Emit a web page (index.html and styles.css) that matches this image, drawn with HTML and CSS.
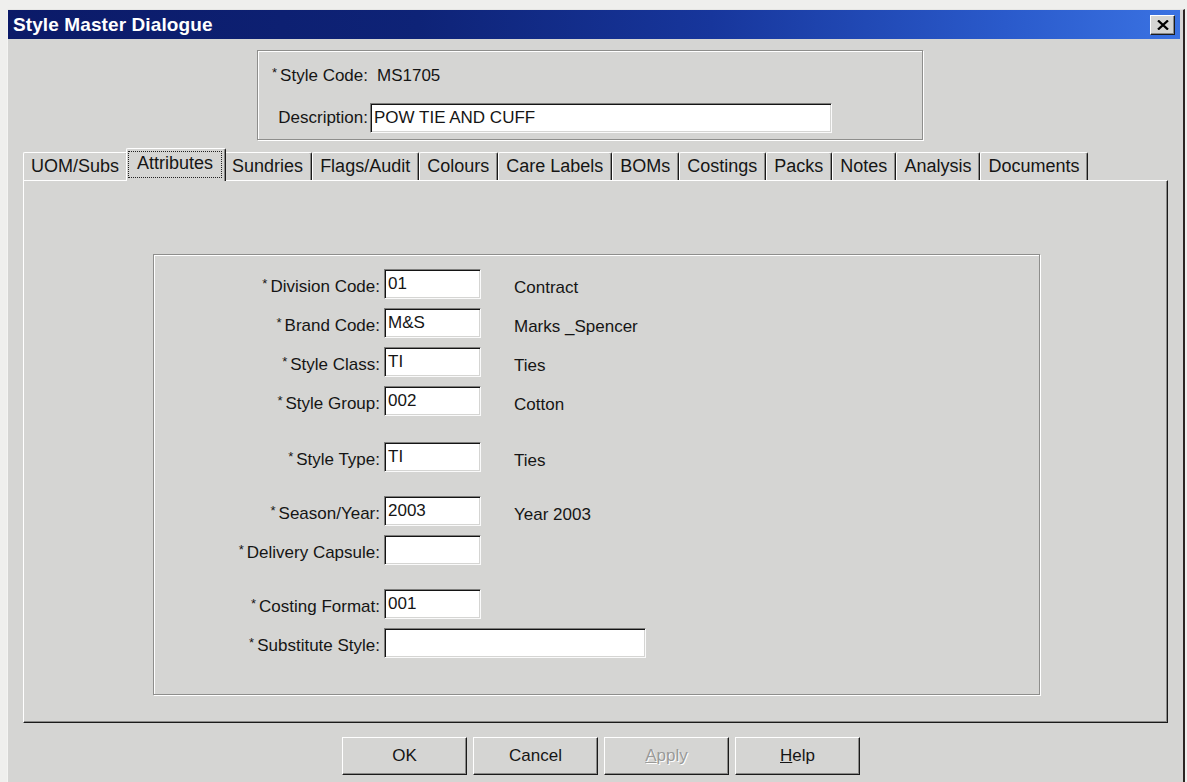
FILE: index.html
```html
<!DOCTYPE html>
<html>
<head>
<meta charset="utf-8">
<title>Style Master Dialogue</title>
<link rel="stylesheet" href="styles.css">
</head>
<body>
<div class="window">
  <div class="titlebar">
    <span class="title">Style Master Dialogue</span>
    <button class="close" aria-label="Close">
      <svg width="12" height="10" viewBox="0 0 12 10"><path d="M1 0.5 L11 9.5 M11 0.5 L1 9.5" stroke="#000" stroke-width="2.3"/></svg>
    </button>
  </div>

  <div class="header-box">
    <div class="hdr-label"><span class="req hdr-req">*</span>Style Code:</div>
    <div class="hdr-value">MS1705</div>
    <div class="hdr-label">Description:</div>
    <div class="field desc-field">POW TIE AND CUFF</div>
  </div>

  <div class="tabs">
    <div class="tab">UOM/Subs</div>
    <div class="tab active"><span class="focus">Attributes</span></div>
    <div class="tab">Sundries</div>
    <div class="tab">Flags/Audit</div>
    <div class="tab">Colours</div>
    <div class="tab">Care Labels</div>
    <div class="tab">BOMs</div>
    <div class="tab">Costings</div>
    <div class="tab">Packs</div>
    <div class="tab">Notes</div>
    <div class="tab">Analysis</div>
    <div class="tab">Documents</div>
  </div>

  <div class="panel">
    <div class="group">
      <div class="row">
        <div class="label"><span class="req">*</span>Division Code:</div>
        <div class="field">01</div>
        <div class="desc">Contract</div>
      </div>
      <div class="row">
        <div class="label"><span class="req">*</span>Brand Code:</div>
        <div class="field">M&amp;S</div>
        <div class="desc">Marks _Spencer</div>
      </div>
      <div class="row">
        <div class="label"><span class="req">*</span>Style Class:</div>
        <div class="field">TI</div>
        <div class="desc">Ties</div>
      </div>
      <div class="row">
        <div class="label"><span class="req">*</span>Style Group:</div>
        <div class="field">002</div>
        <div class="desc">Cotton</div>
      </div>
      <div class="row gap-lg">
        <div class="label"><span class="req">*</span>Style Type:</div>
        <div class="field">TI</div>
        <div class="desc">Ties</div>
      </div>
      <div class="row gap-md">
        <div class="label"><span class="req">*</span>Season/Year:</div>
        <div class="field">2003</div>
        <div class="desc">Year 2003</div>
      </div>
      <div class="row">
        <div class="label"><span class="req">*</span>Delivery Capsule:</div>
        <div class="field"></div>
        <div class="desc"></div>
      </div>
      <div class="row gap-md">
        <div class="label"><span class="req">*</span>Costing Format:</div>
        <div class="field">001</div>
        <div class="desc"></div>
      </div>
      <div class="row">
        <div class="label"><span class="req">*</span>Substitute Style:</div>
        <div class="field long"></div>
      </div>
    </div>
  </div>

  <div class="buttons">
    <button class="btn">OK</button>
    <button class="btn">Cancel</button>
    <button class="btn disabled"><u>A</u>pply</button>
    <button class="btn"><u>H</u>elp</button>
  </div>
</div>
</body>
</html>
```

FILE: styles.css
```css
* {
  box-sizing: border-box;
}

html,
body {
  margin: 0;
  padding: 0;
}

body {
  width: 1187px;
  height: 782px;
  overflow: hidden;
  background: #efefed;
  font-family: "Liberation Sans", Arial, sans-serif;
  color: #151515;
}

/* dialog frame */
.window {
  margin: 9px 0 0 7px;
  width: 1178px;
  height: 773px;
  background: #d5d5d3;
  border-top: 1px solid #e6e6e4;
  border-left: 1px solid #f4f4f2;
  border-right: 2px solid #2b2522;
  display: flex;
  flex-direction: column;
}

.titlebar {
  height: 29px;
  margin-right: 3px;
  padding-left: 5px;
  display: flex;
  align-items: center;
  background: linear-gradient(90deg, #0b1a68 0%, #0e2377 35%, #17369c 60%, #2a5acb 85%, #3a72e2 100%);
}

.title {
  color: #fff;
  font-weight: bold;
  font-size: 19px;
  letter-spacing: 0.1px;
}

.close {
  margin-left: auto;
  margin-right: 5px;
  width: 25px;
  height: 20px;
  padding: 0;
  display: flex;
  align-items: center;
  justify-content: center;
  background: #d5d5d3;
  border: 1px solid;
  border-color: #ffffff #1c1c1c #1c1c1c #ffffff;
  box-shadow: inset -1px -1px #8a8a88;
}

/* style code / description block */
.header-box {
  margin: 11px 0 0 249px;
  width: 666px;
  height: 90px;
  border: 1px solid #8e8e8c;
  box-shadow: inset 1px 1px #fff, 1px 1px #fff;
  padding-top: 10px;
  display: grid;
  grid-template-columns: 110px 1fr;
  grid-template-rows: 26px 28px;
  row-gap: 16px;
  font-size: 17px;
}

.hdr-label {
  text-align: right;
  padding-top: 2px;
  line-height: 26px;
  white-space: nowrap;
}

.hdr-value {
  padding-left: 9px;
  padding-top: 2px;
  line-height: 26px;
}

.hdr-req {
  margin-right: 5px;
}

.desc-field {
  margin-left: 2px;
  width: 462px;
  height: 28px;
  line-height: 26px;
}

/* tab strip */
.tabs {
  display: flex;
  align-items: flex-end;
  height: 32px;
  margin: 8px 0 0 15px;
}

.tab {
  height: 28px;
  padding: 0 8px 0 7px;
  font-size: 18px;
  line-height: 26px;
  white-space: nowrap;
  background: #d5d5d3;
  border-top: 1px solid #fff;
  border-left: 1px solid #fff;
  border-right: 1px solid #1a1a1a;
  box-shadow: inset -1px 0 #8a8a88;
  border-radius: 2px 2px 0 0;
}

.tab.active {
  position: relative;
  z-index: 1;
  height: 33px;
  margin: 0 -2px -1px -2px;
  padding: 2px 3px 0 1px;
}

.focus {
  display: block;
  height: 27px;
  padding: 0 9px 0 9px;
  line-height: 25px;
  outline: 1px dotted #222;
  outline-offset: -1px;
}

/* tab page */
.panel {
  margin-left: 15px;
  width: 1145px;
  height: 543px;
  border-top: 1px solid #fff;
  border-left: 1px solid #fff;
  border-right: 1px solid #1a1a1a;
  border-bottom: 1px solid #1a1a1a;
  box-shadow: inset -1px -1px #8a8a88;
  padding: 73px 0 0 129px;
}

.group {
  width: 887px;
  height: 441px;
  border: 1px solid #8e8e8c;
  box-shadow: inset 1px 1px #fff, 1px 1px #fff;
  padding-top: 14px;
  display: flex;
  flex-direction: column;
  gap: 9px;
}

.row {
  display: grid;
  grid-template-columns: 230px 97px auto;
  height: 30px;
  font-size: 17px;
}

.gap-lg {
  margin-top: 17px;
}

.gap-md {
  margin-top: 15px;
}

.label {
  text-align: right;
  padding-right: 4px;
  padding-top: 4px;
  line-height: 28px;
  white-space: nowrap;
}

/* required-field marker, raised without moving the baseline */
.req {
  position: relative;
  top: -4px;
  font-size: 13px;
  margin-right: 3px;
}

.desc {
  padding-left: 33px;
  padding-top: 8px;
  line-height: 22px;
  white-space: nowrap;
}

/* sunken edit box */
.field {
  height: 30px;
  background: #fff;
  border: 1px solid;
  border-color: #7e7e7c #fafafa #fafafa #7e7e7c;
  box-shadow: inset 1px 1px #141414, inset -1px -1px #d5d5d3;
  padding-left: 3px;
  font-size: 17px;
  line-height: 28px;
  white-space: nowrap;
}

.field.long {
  width: 262px;
  grid-column: 2 / 4;
}

/* dialog buttons */
.buttons {
  display: flex;
  gap: 6px;
  margin: 14px 0 0 334px;
}

.btn {
  width: 125px;
  height: 38px;
  padding: 0;
  font-family: "Liberation Sans", Arial, sans-serif;
  font-size: 17px;
  color: #151515;
  background: #d5d5d3;
  border: 1px solid;
  border-color: #ffffff #1a1a1a #1a1a1a #ffffff;
  box-shadow: inset -1px -1px #8a8a88;
}

.btn.disabled {
  color: #9a9a98;
  text-shadow: 1px 1px #fff;
}
```
